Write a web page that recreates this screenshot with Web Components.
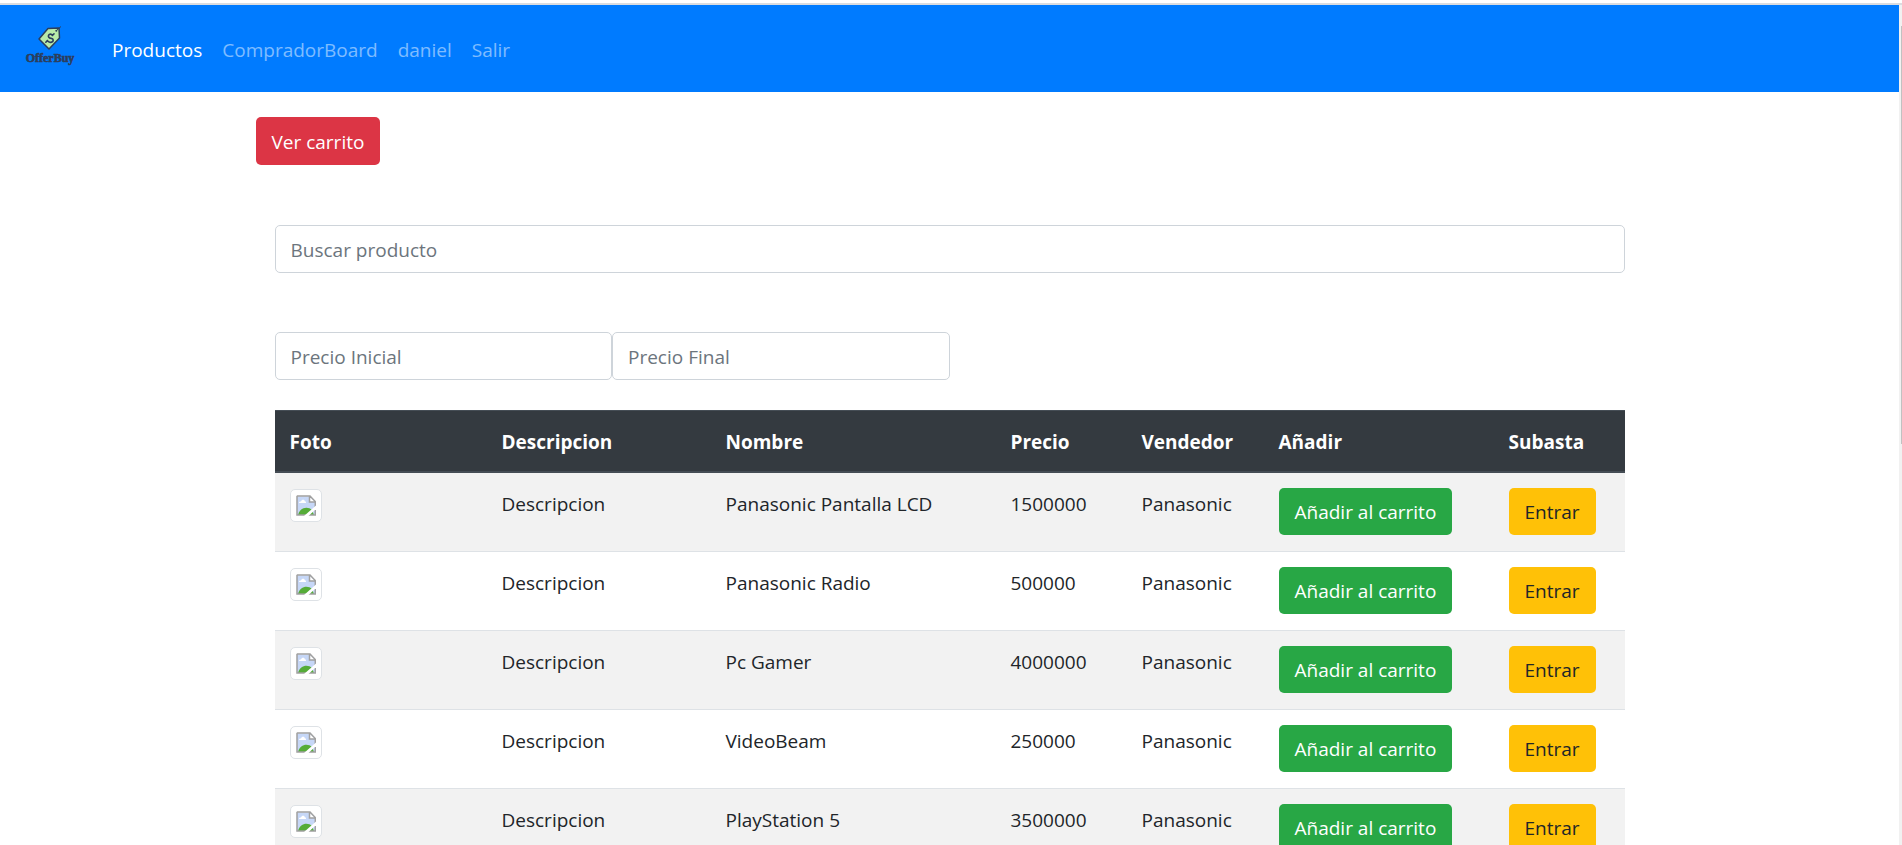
<!DOCTYPE html>
<html lang="es">
<head>
<meta charset="utf-8">
<title>OfferBuy - Productos</title>
<style>
  body { margin: 0; background: #fff; color: #212529; font: 19px/30px "Open Sans", "Noto Sans", sans-serif; }
</style>
</head>
<body>
<offer-app></offer-app>
<script>
const define = (name, html, setup) => {
  const template = document.createElement('template');
  template.innerHTML = html;
  customElements.define(name, class extends HTMLElement {
    constructor() {
      super();
      this.attachShadow({ mode: 'open' }).append(template.content.cloneNode(true));
    }
    connectedCallback() { if (setup) setup(this, this.shadowRoot); }
  });
};

define('offer-logo', `
  <style>
    :host { display: block; width: 50px; height: 50px; }
    svg { display: block; width: 100%; height: 100%; }
    text { font: bold 12px "Liberation Serif", serif; fill: #2c3e5c; stroke: #2c3e5c; stroke-width: .6; }
  </style>
  <svg viewBox="0 0 50 50" role="img" aria-label="OfferBuy">
    <path d="M23 11.5 L34 11 L34.5 21 L24 32 L14 22 Z" fill="#b9eba9" stroke="#2c3e5c" stroke-width="1.5" stroke-linejoin="round"/>
    <path d="M31.5 13.5 L36 9.5" stroke="#2c3e5c" stroke-width="1" fill="none"/>
    <circle cx="31.3" cy="13.7" r="1" fill="#2c3e5c"/>
    <path d="M27.5 18.5 C25.5 15.8 22.3 18 23.8 20.3 C25 22.2 28 20.5 28.2 23 C28.2 25.8 24.2 26.3 22.4 23.6 M27.3 18.3 L29 16.8 M22.4 23.6 L20.8 25.2" stroke="#2c3e5c" stroke-width="1.6" fill="none" stroke-linecap="round"/>
    <text x="25" y="45" text-anchor="middle">OfferBuy</text>
  </svg>`);

define('nav-link', `
  <style>
    :host { display: block; color: rgba(255,255,255,.5); }
    :host([active]) { color: #fff; }
    a { display: block; padding: 12px 10px 10px; color: inherit; text-decoration: none; }
  </style>
  <a href="#"><slot></slot></a>`);

define('nav-bar', `
  <style>
    :host { display: block; background: #007bff; }
    nav { display: flex; align-items: center; gap: 27px; min-height: 87px; padding: 0 25px; box-sizing: border-box; }
    offer-logo { align-self: flex-start; margin-top: 12px; }
    .links { display: flex; }
  </style>
  <nav><offer-logo></offer-logo><div class="links"><slot></slot></div></nav>`);

define('action-button', `
  <style>
    :host { display: inline-block; vertical-align: top; --bg: #dc3545; --fg: #fff; }
    :host([kind="success"]) { --bg: #28a745; }
    :host([kind="warning"]) { --bg: #ffc107; --fg: #212529; }
    button { display: block; height: var(--button-height, 48px); padding: 1px 16px 0; border: 0; border-radius: 5px; background: var(--bg); color: var(--fg); font: inherit; white-space: nowrap; cursor: pointer; }
  </style>
  <button type="button"><slot></slot></button>`);

define('text-field', `
  <style>
    :host { display: block; }
    input { display: block; width: 100%; height: 48px; box-sizing: border-box; padding: 2px 15px 0; border: 1px solid #ced4da; border-radius: 5px; background: #fff; color: #495057; font: inherit; }
    input::placeholder { color: #6c757d; opacity: 1; }
  </style>
  <input type="text">`, (host, root) => {
  const input = root.querySelector('input');
  input.placeholder = host.getAttribute('hint');
  input.setAttribute('aria-label', host.getAttribute('hint'));
});

/* Thumbnail frame with the missing-picture glyph */
define('product-photo', `
  <style>
    :host { display: block; width: 32px; height: 33px; box-sizing: border-box; padding: 5px; border: 1px solid #dee2e6; border-radius: 5px; background: #fff; }
    svg { display: block; width: 20px; height: 21px; }
  </style>
  <svg viewBox="0 0 20 21" role="img" aria-label="Foto">
    <path d="M1 1.5 H13.5 L19 7 V20 H1 Z" fill="#c6d7f7"/>
    <path d="M3 8 C3 6.5 4.5 6.3 5 6.5 C5.5 4.2 8.5 4.2 8.8 6.2 C10.3 6.2 10.5 8 9.5 8 Z" fill="#fff"/>
    <path d="M2 20 C4 12 12 11 16 15 L18 20 Z" fill="#55ac38"/>
    <path d="M13 1.5 V7 H19 Z" fill="#fff"/>
    <path d="M19.5 7 H13.5 V1.2 M1 1 H14 L19.3 6.5 V12 M1 .8 V20 H19.3 V15" fill="none" stroke="#a0a0a0" stroke-width="1.5"/>
    <path d="M8 21 L20 10.5 V14 L12.5 21 Z" fill="#fff"/>
  </svg>`);

define('product-table', `
  <style>
    :host { display: block; --button-height: 47px; }
    table { width: 100%; table-layout: fixed; border-collapse: separate; border-spacing: 0; }
    th, td { padding: 16px 15px 14px; text-align: left; vertical-align: top; }
    th { background: #343a40; color: #fff; font-weight: bold; border-top: 1px solid #454d55; border-bottom: 2px solid #454d55; }
    td { height: 48px; white-space: nowrap; }
    td.action { padding: 15px; }
    tr + tr td { border-top: 1px solid #dee2e6; }
    tbody tr:nth-child(odd) { background: #f2f2f2; }
    .foto { width: 212px } .desc { width: 224px } .nombre { width: 285px } .precio { width: 131px }
    .vend { width: 137px } .add { width: 230px } .sub { width: 131px }
  </style>
  <table>
    <colgroup><col class="foto"><col class="desc"><col class="nombre"><col class="precio"><col class="vend"><col class="add"><col class="sub"></colgroup>
    <thead><tr><th>Foto</th><th>Descripcion</th><th>Nombre</th><th>Precio</th><th>Vendedor</th><th>Añadir</th><th>Subasta</th></tr></thead>
    <tbody></tbody>
  </table>`, (host, root) => {
  const products = [
    ['Panasonic Pantalla LCD', 1500000],
    ['Panasonic Radio', 500000],
    ['Pc Gamer', 4000000],
    ['VideoBeam', 250000],
    ['PlayStation 5', 3500000]
  ];
  root.querySelector('tbody').innerHTML = products.map(([name, price]) => `
    <tr><td><product-photo></product-photo></td><td>Descripcion</td><td>${name}</td><td>${price}</td><td>Panasonic</td>
    <td class="action"><action-button kind="success">Añadir al carrito</action-button></td>
    <td class="action"><action-button kind="warning">Entrar</action-button></td></tr>`).join('');
});

define('scroll-rail', `
  <style>
    :host { display: flex; flex-direction: column; align-items: flex-end; width: 3px; padding-top: 21px; box-sizing: border-box; background: #f1f1f1; }
    i { width: 1px; height: 51%; background: #c1c1c1; }
  </style><i></i>`);

define('offer-app', `
  <style>
    :host { display: flex; flex-direction: column; height: 100vh; overflow: hidden; }
    .edge { flex: none; height: 2px; margin-top: 3px; background: #dadce0; }
    .view { flex: 1; min-height: 0; display: flex; }
    .page { flex: 1; min-width: 0; overflow: hidden; }
    main { max-width: 1388px; margin: 0 auto; padding: 25px 19px; }
    .catalog { display: flex; flex-direction: column; padding: 60px 19px; }
    .prices { display: flex; width: 50%; margin: 59px 0 30px; }
    .prices text-field { flex: 1; }
  </style>
  <div class="edge"></div>
  <div class="view">
    <div class="page">
      <nav-bar>
        <nav-link active>Productos</nav-link><nav-link>CompradorBoard</nav-link><nav-link>daniel</nav-link><nav-link>Salir</nav-link>
      </nav-bar>
      <main>
        <action-button>Ver carrito</action-button>
        <section class="catalog">
          <text-field hint="Buscar producto"></text-field>
          <div class="prices">
            <text-field hint="Precio Inicial"></text-field>
            <text-field hint="Precio Final"></text-field>
          </div>
          <product-table></product-table>
        </section>
      </main>
    </div>
    <scroll-rail></scroll-rail>
  </div>`);
</script>
</body>
</html>
